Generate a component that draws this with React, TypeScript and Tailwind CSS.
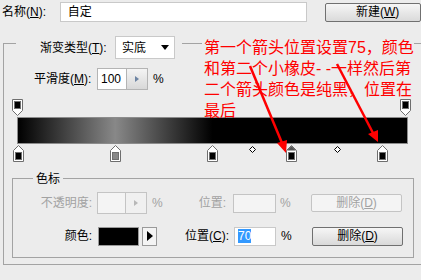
import React from "react"

const font = "font-['Liberation_Sans','Noto_Sans_CJK_SC',sans-serif]"

// one colour stop under / over the gradient bar
function Stop({ color, selected, top }: { color: string; selected?: boolean; top?: boolean }) {
  if (top) {
    return (
      <svg width="11" height="17" viewBox="0 0 11 17">
        <path d="M0.5 0.5 H10.5 V11.5 L5.5 16.5 L0.5 11.5 Z" fill="#fff" stroke="#6e6e6e" />
        <rect x="2.5" y="2.5" width="6" height="7" fill={color} stroke="#6e6e6e" strokeWidth="1" />
      </svg>
    )
  }
  return (
    <svg width="11" height="17" viewBox="0 0 11 17">
      <path d="M0.5 16.5 V5.5 L5.5 0.5 L10.5 5.5 V16.5 Z" fill="#fff" stroke="#6e6e6e" />
      {selected && <path d="M1 5.5 L5.5 1 L10 5.5 Z" fill="#555" />}
      <rect x="2.5" y="7.5" width="6" height="7" fill={color} stroke="#6e6e6e" strokeWidth="1" />
    </svg>
  )
}

function Diamond() {
  return (
    <svg width="7" height="7" viewBox="0 0 7 7">
      <path d="M3.5 0.5 L6.5 3.5 L3.5 6.5 L0.5 3.5 Z" fill="#fff" stroke="#000" />
    </svg>
  )
}

function Spin({ disabled }: { disabled?: boolean }) {
  return (
    <div className={`flex h-full w-[21px] items-center justify-center border border-l-0 ${disabled ? "border-[#c4c4c4] bg-[#f0f0f0]" : "border-[#b4b4b4] bg-gradient-to-b from-[#f4f4f4] to-[#d8d8d8]"}`}>
      <svg width="4" height="6" viewBox="0 0 4 6">
        <path d="M0 0 L4 3 L0 6 Z" fill={disabled ? "#b8b8b8" : "#6d84a3"} />
      </svg>
    </div>
  )
}

function Key({ k }: { k: string }) {
  return (
    <>
      (<span className="underline underline-offset-1">{k}</span>)
    </>
  )
}

const bottomStops = [
  { x: 14, color: "#000" },
  { x: 111, color: "#888" },
  { x: 208, color: "#000" },
  { x: 287, color: "#000", selected: true },
  { x: 378, color: "#000" },
]

export default function App() {
  return (
    <div className={`relative h-[280px] w-[421px] overflow-hidden bg-[#ececec] text-[12px] text-black ${font}`}>
      {/* name row */}
      <div className="flex items-start pt-[2px]">
        <div className="h-[20px] w-[61px] pl-[2px] leading-[20px]">名称<Key k="N" />:</div>
        <div className="h-[20px] w-[252px] border border-[#c9c9c9] bg-white pl-[7px] leading-[18px]">自定</div>
        <button className="ml-[18px] mt-[1px] h-[19px] w-[96px] shrink-0 rounded-[2px] border border-[#707070] bg-gradient-to-b from-[#f6f6f6] to-[#dadada] text-left pl-[30px] leading-[17px]">
          新建<Key k="W" />
        </button>
      </div>

      {/* gradient group */}
      <div className="ml-[3px] mt-[21px] h-[222px] w-[440px] border border-[#a3a3a3]">
        <div className="-mt-[8px] ml-[12px] flex h-[23px] w-[166px] items-center bg-[#ececec]">
          <div className="w-[99px] pl-[24px]">渐变类型<Key k="T" />:</div>
          <div className="flex h-[23px] w-[60px] items-center justify-between border border-[#c9c9c9] bg-white pl-[6px] pr-[5px]">
            <span>实底</span>
            <svg width="8" height="5" viewBox="0 0 8 5"><path d="M0 0 H8 L4 5 Z" fill="#000" /></svg>
          </div>
        </div>

        <div className="mt-[9px] flex h-[22px] items-center">
          <div className="w-[93px] pl-[30px]">平滑度<Key k="M" />:</div>
          <div className="flex h-[22px] items-center">
            <div className="h-full w-[30px] border border-[#b4b4b4] bg-white pl-[3px] leading-[20px]">100</div>
            <Spin />
          </div>
          <span className="ml-[5px]">%</span>
        </div>

        {/* gradient bar with stops */}
        <div className="relative mt-[9px] h-[66px]">
          <div className="absolute left-[8px] top-0"><Stop color="#000" top /></div>
          <div className="absolute left-[396px] top-0"><Stop color="#000" top /></div>
          <div className="absolute left-[13px] top-[18px] h-[27px] w-[391px] border border-[#8c8c8c] bg-[linear-gradient(to_right,#000_0%,#888_25%,#000_50%,#000_100%)]" />
          {bottomStops.map(s => (
            <div key={s.x} className="absolute top-[46px]" style={{ left: s.x - 5 }}>
              <Stop color={s.color} selected={s.selected} />
            </div>
          ))}
          <div className="absolute left-[245px] top-[47px]"><Diamond /></div>
          <div className="absolute left-[330px] top-[47px]"><Diamond /></div>
        </div>

        {/* colour stop group */}
        <div className="ml-[8px] mt-[13px] h-[80px] w-[402px] border border-[#a3a3a3]">
          <div className="-mt-[8px] ml-[20px] h-[16px] w-fit bg-[#ececec] px-[3px] leading-[16px]">色标</div>

          <div className="mt-[5px] flex h-[22px] items-center text-[#a2a2a2]">
            <div className="w-[84px] pr-[5px] text-right">不透明度:</div>
            <div className="flex h-[22px]">
              <div className="h-full w-[29px] border border-[#c4c4c4] bg-[#f4f4f4]" />
              <Spin disabled />
            </div>
            <span className="ml-[5px] w-[31px]">%</span>
            <div className="w-[50px] pr-[7px] text-right">位置:</div>
            <div className="h-[19px] w-[43px] border border-[#c4c4c4] bg-[#f4f4f4]" />
            <span className="ml-[4px] w-[31px]">%</span>
            <div className="h-[18px] w-[91px] rounded-[2px] border border-[#c4c4c4] bg-[#f4f4f4] text-center leading-[16px]">删除<Key k="D" /></div>
          </div>

          <div className="mt-[12px] flex h-[20px] items-center">
            <div className="w-[84px] pr-[5px] text-right">颜色:</div>
            <div className="ml-[1px] h-[19px] w-[41px] border border-[#9a9a9a] bg-black" />
            <div className="ml-[3px] flex h-[19px] w-[15px] items-center justify-center border border-[#9a9a9a] bg-[#f4f4f4]">
              <svg width="6" height="10" viewBox="0 0 6 10"><path d="M0 0 L6 5 L0 10 Z" fill="#000" /></svg>
            </div>
            <div className="w-[77px] pr-[5px] text-right">位置<Key k="C" />:</div>
            <div className="h-[19px] w-[42px] border border-[#c9c9c9] bg-white pl-[3px] leading-[17px]">
              <span className="bg-[#3399ff] text-white">70</span>
            </div>
            <span className="ml-[5px] w-[31px]">%</span>
            <button className="h-[19px] w-[91px] rounded-[2px] border border-[#707070] bg-gradient-to-b from-[#f6f6f6] to-[#d9d9d9] leading-[17px]">删除<Key k="D" /></button>
          </div>
        </div>
      </div>

      {/* red annotation */}
      <div className="absolute left-[202px] top-[37px] whitespace-nowrap text-[16px] leading-[21px] text-[#ff0000]">
        <div className="bg-[#ececec] pl-[2px]">第一个箭头位置设置75，颜色</div>
        <div className="pl-[2px]">和第二个小橡皮- -一样然后第</div>
        <div className="pl-[2px]">二个箭头颜色是纯黑，位置在</div>
        <div className="pl-[2px]">最后</div>
      </div>
      <svg className="pointer-events-none absolute left-0 top-0" width="421" height="280" viewBox="0 0 421 280">
        <g stroke="#ff0000" strokeWidth="2.5" fill="#ff0000">
          <line x1="250" y1="66" x2="282" y2="143" />
          <line x1="337" y1="64" x2="373" y2="133" />
        </g>
        <path d="M286 153 L277 143 L287 140 Z" fill="#ff0000" />
        <path d="M378 142 L368 134 L378 130 Z" fill="#ff0000" />
      </svg>
    </div>
  )
}
